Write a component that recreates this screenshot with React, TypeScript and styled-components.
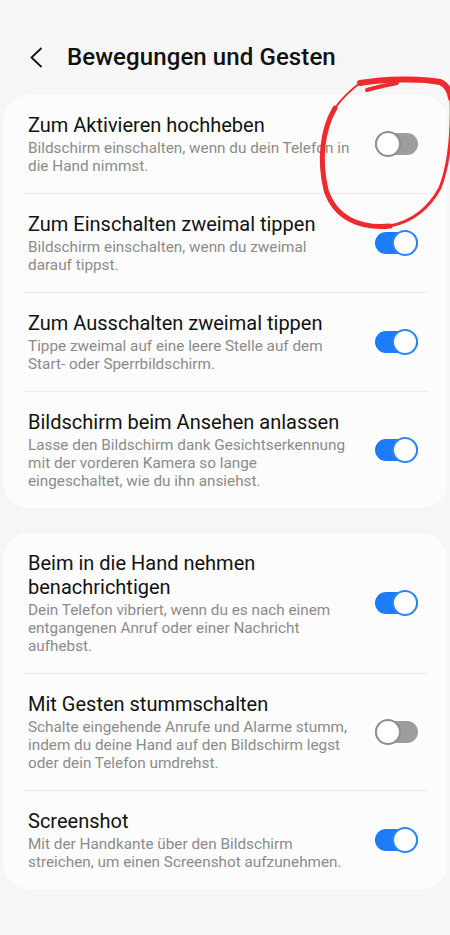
import styled, { createGlobalStyle } from 'styled-components';

const GlobalStyle = createGlobalStyle`
    html, body {
        margin: 0;
        padding: 0;
        background: #f6f6f6;
    }
    * {
        box-sizing: border-box;
    }
`;

const Page = styled.div`
    position: relative;
    width: 450px;
    min-height: 935px;
    background: #f6f6f6;
    font-family: Roboto, 'Noto Sans', 'Liberation Sans', sans-serif;
    color: #111;
    overflow: hidden;
`;

const Header = styled.header`
    display: flex;
    align-items: center;
    gap: 24px;
    height: 48px;
    margin-top: 33px;
    margin-bottom: 14px;
    padding-left: 30px;
`;

const BackButton = styled.button`
    display: flex;
    align-items: center;
    padding: 0;
    border: none;
    background: none;
    color: #111;
`;

const Title = styled.h1`
    margin: 0;
    font-size: 24px;
    font-weight: 500;
    letter-spacing: 0.1px;
`;

const Card = styled.section`
    margin: 0 3px 25px;
    padding: 0 20px;
    background: #fcfcfc;
    border-radius: 26px;
`;

const Row = styled.div`
    display: flex;
    align-items: center;
    gap: 20px;
    padding: 18px 9px 18px 5px;
    border-bottom: 1px solid #ebebeb;

    &:last-child {
        border-bottom: none;
    }
`;

const TextBlock = styled.div`
    flex: 1;
    min-width: 0;
`;

const RowTitle = styled.div`
    font-size: 20px;
    line-height: 24px;
    color: #121212;
`;

const RowSub = styled.div`
    margin-top: 2px;
    font-size: 15.3px;
    line-height: 18px;
    color: #8b8b8b;
    white-space: nowrap;
`;

const Track = styled.div<{ $on: boolean }>`
    position: relative;
    flex: none;
    width: 43px;
    height: 22px;
    border-radius: 11px;
    background: ${(p) => (p.$on ? '#1c7cf6' : '#9d9d9d')};
`;

const Knob = styled.div<{ $on: boolean }>`
    position: absolute;
    top: -2px;
    ${(p) => (p.$on ? 'right: 0;' : 'left: 0;')}
    width: 26px;
    height: 26px;
    border-radius: 50%;
    background: #fff;
    border: 2px solid ${(p) => (p.$on ? '#2d86f7' : '#8f8f8f')};
`;

const Annotation = styled.svg`
    position: absolute;
    top: 0;
    left: 0;
    pointer-events: none;
`;

interface Setting {
    title: string[];
    sub: string[];
    on: boolean;
}

const group1: Setting[] = [
    {
        title: ['Zum Aktivieren hochheben'],
        sub: ['Bildschirm einschalten, wenn du dein Telefon in', 'die Hand nimmst.'],
        on: false,
    },
    {
        title: ['Zum Einschalten zweimal tippen'],
        sub: ['Bildschirm einschalten, wenn du zweimal', 'darauf tippst.'],
        on: true,
    },
    {
        title: ['Zum Ausschalten zweimal tippen'],
        sub: ['Tippe zweimal auf eine leere Stelle auf dem', 'Start- oder Sperrbildschirm.'],
        on: true,
    },
    {
        title: ['Bildschirm beim Ansehen anlassen'],
        sub: ['Lasse den Bildschirm dank Gesichtserkennung', 'mit der vorderen Kamera so lange', 'eingeschaltet, wie du ihn ansiehst.'],
        on: true,
    },
];

const group2: Setting[] = [
    {
        title: ['Beim in die Hand nehmen', 'benachrichtigen'],
        sub: ['Dein Telefon vibriert, wenn du es nach einem', 'entgangenen Anruf oder einer Nachricht', 'aufhebst.'],
        on: true,
    },
    {
        title: ['Mit Gesten stummschalten'],
        sub: ['Schalte eingehende Anrufe und Alarme stumm,', 'indem du deine Hand auf den Bildschirm legst', 'oder dein Telefon umdrehst.'],
        on: false,
    },
    {
        title: ['Screenshot'],
        sub: ['Mit der Handkante über den Bildschirm', 'streichen, um einen Screenshot aufzunehmen.'],
        on: true,
    },
];

function Toggle({ on }: { on: boolean }) {
    return (
        <Track $on={on}>
            <Knob $on={on} />
        </Track>
    );
}

function SettingRow({ item }: { item: Setting }) {
    return (
        <Row>
            <TextBlock>
                <RowTitle>
                    {item.title.map((t) => (
                        <div key={t}>{t}</div>
                    ))}
                </RowTitle>
                <RowSub>
                    {item.sub.map((s) => (
                        <div key={s}>{s}</div>
                    ))}
                </RowSub>
            </TextBlock>
            <Toggle on={item.on} />
        </Row>
    );
}

const RED = '#ef2a2e';

export default function App() {
    return (
        <Page>
            <GlobalStyle />
            <Header>
                <BackButton aria-label="Zurück">
                    <svg width="13" height="21" viewBox="0 0 13 21">
                        <polyline points="11.5,1 1.5,10.5 11.5,20" fill="none" stroke="#111" strokeWidth="1.8" />
                    </svg>
                </BackButton>
                <Title>Bewegungen und Gesten</Title>
            </Header>
            <Card>
                {group1.map((item) => (
                    <SettingRow key={item.title[0]} item={item} />
                ))}
            </Card>
            <Card>
                {group2.map((item) => (
                    <SettingRow key={item.title[0]} item={item} />
                ))}
            </Card>
            <Annotation width="450" height="935" viewBox="0 0 450 935">
                <g fill="none" stroke={RED} strokeLinecap="round" strokeLinejoin="round">
                    <path d="M 360 83 C 385 79, 420 78, 440 82 C 447 85, 450 92, 451 98" strokeWidth="6" />
                    <path d="M 451 98 C 452 130, 449 165, 440 188 C 428 210, 410 222, 390 226" strokeWidth="3" />
                    <path d="M 390 226 C 360 229, 335 218, 326 190 C 319 160, 322 130, 335 108" strokeWidth="5" />
                    <path d="M 335 108 C 343 97, 352 89, 360 83" strokeWidth="2" />
                    <path d="M 367 90 C 378 87, 388 85, 397 83" strokeWidth="4" />
                </g>
            </Annotation>
        </Page>
    );
}
